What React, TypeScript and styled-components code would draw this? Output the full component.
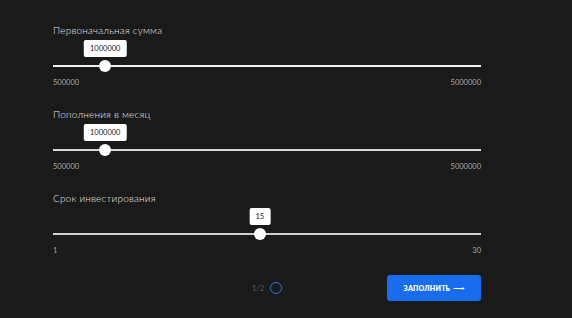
import React from "react";
import styled, { createGlobalStyle } from "styled-components";

const Global = createGlobalStyle`
  html, body { margin: 0; padding: 0; background: #1a1a1a; }
  body { font-family: "Lato", "Open Sans", sans-serif; }
`;

const Page = styled.div`
  width: 572px;
  height: 318px;
  box-sizing: border-box;
  padding: 24px 91px 0 53px;
  display: flex;
  flex-direction: column;
  gap: 20px;
`;

const Section = styled.div`
  display: flex;
  flex-direction: column;
`;

const Label = styled.div`
  font-size: 10px;
  line-height: 12px;
  height: 12px;
  color: #e2e2e2;
  font-weight: 300;
  letter-spacing: 0.2px;
`;

const SliderWrap = styled.div`
  padding-top: 24px;
`;

const TrackRow = styled.div`
  position: relative;
  height: 12px;
  display: flex;
  align-items: center;
`;

const Line = styled.div<{ $shade: string }>`
  flex: 1;
  height: 2px;
  background: ${(p) => p.$shade};
`;

const Thumb = styled.div`
  position: absolute;
  top: 0;
  width: 12px;
  height: 12px;
  margin-left: -6px;
  border-radius: 50%;
  background: #fff;
`;

const Bubble = styled.div`
  position: absolute;
  bottom: 15px;
  left: 50%;
  transform: translateX(-50%);
  background: #fff;
  color: #222;
  font-size: 7.5px;
  line-height: 17px;
  height: 17px;
  padding: 0 6px;
  border-radius: 2px;
  white-space: nowrap;
`;

const Range = styled.div`
  margin-top: 6px;
  display: flex;
  justify-content: space-between;
  font-size: 7.5px;
  line-height: 10px;
  color: #a8a8a8;
`;

const Footer = styled.div`
  margin-top: -1px;
  display: grid;
  grid-template-columns: 1fr auto 1fr;
  align-items: center;
`;

const Pager = styled.div`
  grid-column: 2;
  display: flex;
  align-items: center;
  gap: 6px;
  font-size: 7.5px;
  color: #5a5a5a;
`;

const Ring = styled.div`
  width: 10px;
  height: 10px;
  border-radius: 50%;
  border: 1.6px solid #2f74de;
`;

const Button = styled.button`
  grid-column: 3;
  justify-self: end;
  width: 94px;
  height: 26px;
  border: none;
  border-radius: 3px;
  background: #176cf0;
  color: #fff;
  font-family: "Lato", sans-serif;
  font-weight: 800;
  font-size: 7px;
  letter-spacing: 0.2px;
  display: flex;
  align-items: center;
  justify-content: center;
  gap: 3px;
  padding: 0;
`;

const Arrow = styled.span`
  font-weight: 400;
  font-size: 8px;
`;

type SliderProps = {
  label: string;
  min: number;
  max: number;
  value: number;
  shade: string;
};

function Slider({ label, min, max, value, shade }: SliderProps) {
  const frac = (value - min) / (max - min);
  const left = `calc(6px + ${frac} * (100% - 12px))`;
  return (
    <Section>
      <Label>{label}</Label>
      <SliderWrap>
        <TrackRow>
          <Line $shade={shade} />
          <Thumb style={{ left }}>
            <Bubble>{value}</Bubble>
          </Thumb>
        </TrackRow>
      </SliderWrap>
      <Range>
        <span>{min}</span>
        <span>{max}</span>
      </Range>
    </Section>
  );
}

export default function App() {
  return (
    <>
      <Global />
      <Page>
        <Slider label="Первоначальная сумма" min={500000} max={5000000} value={1000000} shade="#f2f2f2" />
        <Slider label="Пополнения в месяц" min={500000} max={5000000} value={1000000} shade="#d8d8d8" />
        <Slider label="Срок инвестирования" min={1} max={30} value={15} shade="#cfcfcf" />
        <Footer>
          <Pager>
            <span>1/2</span>
            <Ring />
          </Pager>
          <Button>
            <span>ЗАПОЛНИТЬ</span>
            <Arrow>⟶</Arrow>
          </Button>
        </Footer>
      </Page>
    </>
  );
}
